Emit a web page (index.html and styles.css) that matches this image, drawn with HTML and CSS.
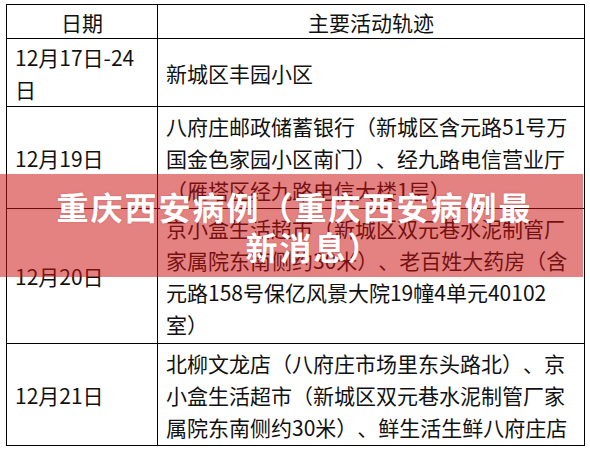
FILE: index.html
```html
<!DOCTYPE html>
<html lang="zh-CN">
<head>
<meta charset="utf-8">
<link rel="stylesheet" href="styles.css">
</head>
<body>
<div class="page">
  <table class="track">
    <colgroup><col class="c-date"><col class="c-place"></colgroup>
    <thead>
      <tr class="r-head"><th>日期</th><th>主要活动轨迹</th></tr>
    </thead>
    <tbody>
      <tr class="r1"><td class="date">12月17日-24<br>日</td><td class="place">新城区丰园小区</td></tr>
      <tr class="r2"><td class="date">12月19日</td><td class="place">八府庄邮政储蓄银行（新城区含元路51号万<br>国金色家园小区南门）、经九路电信营业厅<br>（雁塔区经九路电信大楼1层）</td></tr>
      <tr class="r3"><td class="date">12月20日</td><td class="place">京小盒生活超市（新城区双元巷水泥制管厂<br>家属院东南侧约30米）、老百姓大药房（含<br>元路158号保亿风景大院19幢4单元40102<br>室）</td></tr>
      <tr class="r4"><td class="date">12月21日</td><td class="place">北柳文龙店（八府庄市场里东头路北）、京<br>小盒生活超市（新城区双元巷水泥制管厂家<br>属院东南侧约30米）、鲜生活生鲜八府庄店</td></tr>
    </tbody>
  </table>
  <div class="band">
    <div class="title">
      <span class="l1">重庆西安病例（重庆西安病例最</span>
      <span class="l2">新消息）</span>
    </div>
  </div>
</div>
</body>
</html>
```
FILE: styles.css
```css
html, body {
  margin: 0;
  padding: 0;
  background: #fff;
}
body {
  width: 590px;
  height: 452px;
  overflow: hidden;
  font-family: "Noto Sans CJK SC", "Microsoft YaHei", sans-serif;
  color: #111;
  text-spacing-trim: space-all;
}
.page {
  position: relative;
  padding: 4px 0 0 6px;
}
.track {
  border-collapse: collapse;
  table-layout: fixed;
  width: 578px;
  font-size: 21px;
  line-height: 32px;
}
.c-date { width: 151px; }
.c-place { width: 427px; }
.track th, .track td {
  border: 1px solid #000;
  padding: 0 0 0 8px;
  vertical-align: middle;
  white-space: nowrap;
  overflow: hidden;
}
.track th {
  font-weight: 400;
  text-align: center;
  padding: 0;
  height: 33px;
}
.track td { text-align: left; }
.r1 td { height: 67px; }
.r2 td { height: 101px; }
.r3 td { height: 134px; }
.r4 td { height: 101px; }
.place { padding-left: 7px; }

.band {
  position: absolute;
  left: 0;
  top: 174px;
  width: 583px;
  height: 103px;
  background: rgba(204, 18, 18, 0.53);
  display: flex;
  align-items: center;
}
.title {
  width: 100%;
  display: flex;
  flex-direction: column;
  color: #fff;
  font-weight: 700;
  font-size: 32px;
  letter-spacing: 2px;
  line-height: 40px;
  text-shadow: 0 0 2px rgba(120, 0, 0, 0.25);
}
.l1 { align-self: center; padding-left: 6px; }
.l2 { align-self: center; padding-left: 44px; }
```
